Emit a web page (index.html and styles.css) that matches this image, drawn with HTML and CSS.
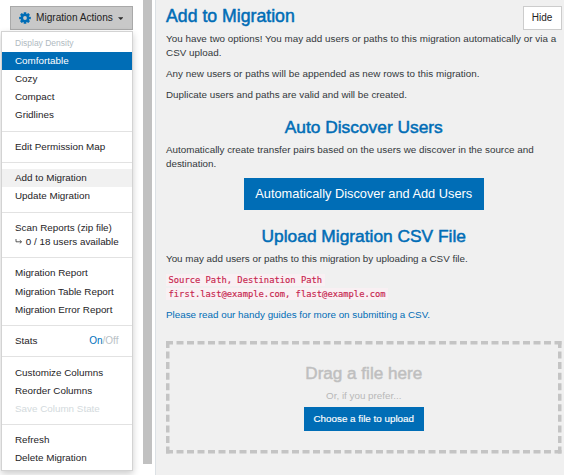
FILE: index.html
```html
<!DOCTYPE html>
<html lang="en">
<head>
<meta charset="utf-8">
<title>Add to Migration</title>
<link rel="stylesheet" href="styles.css">
</head>
<body>
<div class="app">
  <aside class="side">
    <div class="actions">
      <button class="actions-btn">
        <svg class="gear" viewBox="-6 -6 12 12">
          <g fill="#006db6">
            <rect x="-1.35" y="-5.8" width="2.7" height="11.6" rx=".5"/>
            <rect x="-1.35" y="-5.8" width="2.7" height="11.6" rx=".5" transform="rotate(45)"/>
            <rect x="-1.35" y="-5.8" width="2.7" height="11.6" rx=".5" transform="rotate(90)"/>
            <rect x="-1.35" y="-5.8" width="2.7" height="11.6" rx=".5" transform="rotate(135)"/>
            <circle r="4.3"/>
          </g>
          <circle r="1.9" fill="#c8c8c8"/>
        </svg>
        <span>Migration Actions</span>
        <svg class="caret" viewBox="0 0 6 3"><path d="M0 0H6L3 3Z" fill="#2b2b2b"/></svg>
      </button>
      <div class="menu">
        <div class="item header">Display Density</div>
        <div class="item selected">Comfortable</div>
        <div class="item">Cozy</div>
        <div class="item">Compact</div>
        <div class="item">Gridlines</div>
        <hr>
        <div class="item">Edit Permission Map</div>
        <hr>
        <div class="item hover">Add to Migration</div>
        <div class="item">Update Migration</div>
        <hr>
        <div class="item double">Scan Reports (zip file)<br><svg class="hook" viewBox="0 0 7 7"><path d="M.5 1V3.8H6M4.3 2.2L6 3.8L4.3 5.4" fill="none" stroke="#333" stroke-width=".8"/></svg> 0 / 18 users available</div>
        <hr>
        <div class="item">Migration Report</div>
        <div class="item">Migration Table Report</div>
        <div class="item">Migration Error Report</div>
        <hr>
        <div class="item split"><span>Stats</span><span class="toggle"><b>On</b>/Off</span></div>
        <hr>
        <div class="item">Customize Columns</div>
        <div class="item">Reorder Columns</div>
        <div class="item disabled">Save Column State</div>
        <hr>
        <div class="item">Refresh</div>
        <div class="item">Delete Migration</div>
      </div>
    </div>
    <div class="scrollbar"></div>
  </aside>
  <main class="panel">
    <header class="head">
      <h1>Add to Migration</h1>
      <button class="hide">Hide</button>
    </header>
    <p class="intro">You have two options! You may add users or paths to this migration automatically or via a CSV upload.</p>
    <p class="intro">Any new users or paths will be appended as new rows to this migration.</p>
    <p>Duplicate users and paths are valid and will be created.</p>
    <h2>Auto Discover Users</h2>
    <p>Automatically create transfer pairs based on the users we discover in the source and destination.</p>
    <button class="primary large">Automatically Discover and Add Users</button>
    <h2 class="upload">Upload Migration CSV File</h2>
    <p>You may add users or paths to this migration by uploading a CSV file.</p>
    <p class="sample"><code>Source Path, Destination Path<br>first.last@example.com, flast@example.com</code></p>
    <p><a>Please read our handy guides for more on submitting a CSV.</a></p>
    <section class="drop">
      <svg class="dashes" viewBox="0 0 395.5 112.5" fill="none" stroke="#c4c4c4" stroke-width="3.5" stroke-dasharray="7 3.5">
        <path d="M0 1.75H395.5M0 110.75H395.5"/>
        <path d="M1.75 0V112.5M393.75 0V112.5" stroke-dasharray="7 3.55"/>
      </svg>
      <h3>Drag a file here</h3>
      <div class="or">Or, if you prefer...</div>
      <button class="primary">Choose a file to upload</button>
    </section>
  </main>
</div>
</body>
</html>
```
FILE: styles.css
```css
* { box-sizing: border-box; }
body {
  margin: 0;
  overflow: hidden;
  background: #fff;
  font: 9.84px/14.1px "Liberation Sans", Arial, sans-serif;
  color: #33383b;
}
h1, h2, h3, p { margin: 0; }
h1, h2, h3 { font-weight: 400; }
button { font: inherit; padding: 0; border: 0; }
.app { display: flex; width: 564px; height: 475px; }

.side {
  display: flex;
  justify-content: space-between;
  flex: none;
  width: 156px;
  padding-right: 3.5px;
  border-right: 1.5px solid #dce1e5;
}
.actions { position: relative; padding: 6px 0 0 10px; }
.actions-btn {
  display: flex;
  align-items: center;
  width: 123px;
  height: 24px;
  padding: 0 8px;
  border: 1px solid #a9a9a9;
  background: #c8c8c8;
  color: #222;
  font-size: 10.1px;
}
.actions-btn span { margin-left: 5px; }
.gear { width: 12px; height: 12px; }
.caret { width: 5.5px; height: 3px; margin-left: 5px; }
.menu {
  position: absolute;
  top: 31px;
  left: 1px;
  width: 132px;
  height: 440px;
  padding: 3px 0;
  border: 1px solid #d3d3d3;
  background: #fff;
  box-shadow: 0 3px 7px rgba(0, 0, 0, .2);
  color: #1e2326;
  font-size: 9.85px;
  white-space: nowrap;
}
.item { height: 18.15px; padding-left: 13px; line-height: 18.15px; }
.header { height: 17px; line-height: 17px; color: #b0babf; font-size: 8.5px; }
.selected { background: #006db6; color: #fff; }
.hover { background: #f1f1f1; }
.double { height: 32.3px; padding-top: 2px; line-height: 14.1px; }
.disabled { color: #d3dadd; }
.hook { width: 8px; height: 7px; }
.split { display: flex; justify-content: space-between; padding-right: 13.5px; }
.toggle { color: #b9c1c5; font-size: 10px; }
.toggle b { color: #0072bc; font-weight: 400; }
.menu hr { height: 1px; margin: 6.15px 0; border: 0; background: #e2e2e2; }
.scrollbar { width: 8.5px; height: 464px; background: #c1c1c1; }

.panel { flex: 1; padding: 0 2.5px 0 10px; background: #f0f0f0; }
.head { display: flex; justify-content: space-between; height: 31.5px; padding-top: 6px; }
h1, h2 { color: #006db6; -webkit-text-stroke: .5px #006db6; }
h1 { font-size: 17.7px; line-height: 20px; }
h2 { margin-top: 15.5px; font-size: 17.35px; line-height: 20px; text-align: center; padding-bottom: 6px; }
.hide { width: 39px; height: 24px; border: 1px solid #ccc; background: #fff; color: #222; font-size: 10px; }
p { margin-bottom: 6.9px; }
.intro { letter-spacing: .03px; }
.primary {
  display: block;
  width: 120px;
  height: 24px;
  margin: 0 auto;
  background: #006db6;
  color: #fff;
  -webkit-text-stroke: .15px #fff;
}
.large { width: 240px; height: 32px; font-size: 12.8px; -webkit-text-stroke: 0; }
.upload { margin-top: 15.5px; padding-bottom: 6.5px; }
code {
  padding: 1px 2.5px;
  background: #f9f0f3;
  color: #c7254e;
  font: 8.81px/14.1px "DejaVu Sans Mono", monospace;
  -webkit-text-stroke: .15px #c7254e;
  box-decoration-break: clone;
  -webkit-box-decoration-break: clone;
}
a { color: #006db6; }
.drop {
  position: relative;
  height: 112.5px;
  margin-top: 19px;
  padding-top: 23px;
  color: #bfbfbf;
  text-align: center;
}
.dashes { position: absolute; inset: 0; width: 395.5px; height: 112.5px; }
.drop h3 { font-size: 17.1px; line-height: 20px; -webkit-text-stroke: .5px #bfbfbf; }
.or { padding-top: 4.5px; height: 22.5px; color: #b8b8b8; }
```
